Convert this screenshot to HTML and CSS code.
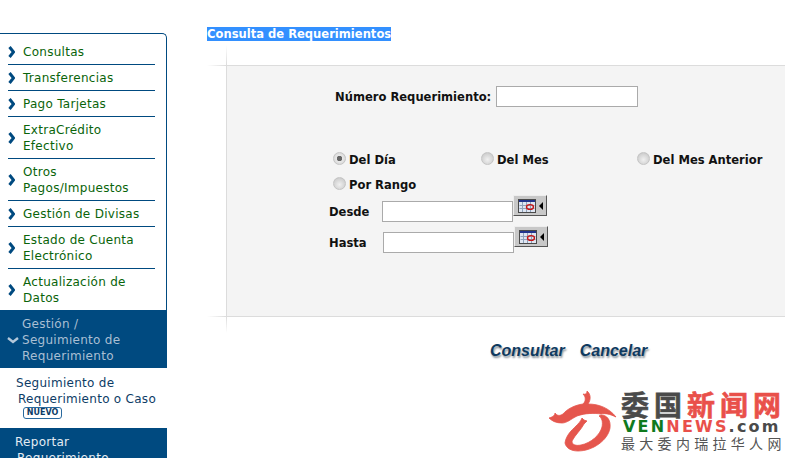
FILE: index.html
```html
<!DOCTYPE html>
<html>
<head>
  <title>Consulta de Requerimientos</title>
  <link rel="stylesheet" href="styles.css">
</head>
<body>
  <div class="sidebar">
    <ul class="menu">
      <li class="item"><svg class="chev" viewBox="0 0 7 12"><path d="M1.5 1l4 5-4 5" /></svg><span>Consultas</span></li>
      <li class="item"><svg class="chev" viewBox="0 0 7 12"><path d="M1.5 1l4 5-4 5" /></svg><span>Transferencias</span></li>
      <li class="item"><svg class="chev" viewBox="0 0 7 12"><path d="M1.5 1l4 5-4 5" /></svg><span>Pago Tarjetas</span></li>
      <li class="item"><svg class="chev" viewBox="0 0 7 12"><path d="M1.5 1l4 5-4 5" /></svg><span>ExtraCrédito<br>Efectivo</span></li>
      <li class="item"><svg class="chev" viewBox="0 0 7 12"><path d="M1.5 1l4 5-4 5" /></svg><span>Otros<br>Pagos/Impuestos</span></li>
      <li class="item"><svg class="chev" viewBox="0 0 7 12"><path d="M1.5 1l4 5-4 5" /></svg><span>Gestión de Divisas</span></li>
      <li class="item"><svg class="chev" viewBox="0 0 7 12"><path d="M1.5 1l4 5-4 5" /></svg><span>Estado de Cuenta<br>Electrónico</span></li>
      <li class="item last"><svg class="chev" viewBox="0 0 7 12"><path d="M1.5 1l4 5-4 5" /></svg><span>Actualización de<br>Datos</span></li>
    </ul>
    <div class="open-head">
      <svg class="chev-down" viewBox="0 0 12 7"><path d="M1 1l5 4 5-4" /></svg>
      <span>Gestión /<br>Seguimiento de<br>Requerimiento</span>
    </div>
    <div class="sub-item">
      <div>Seguimiento de</div>
      <div class="indent">Requerimiento o Caso</div>
      <span class="badge">NUEVO</span>
    </div>
    <div class="sub-active">
      <div>Reportar</div>
      <div class="indent">Requerimiento</div>
    </div>
  </div>

  <div class="main">
    <div class="title-row"><span class="title">Consulta de Requerimientos</span></div>
    <div class="panel">
      <i class="tick top"></i>
      <i class="tick bottom"></i>
      <div class="numero">
        <label for="numero">Número Requerimiento:</label>
        <input type="text" id="numero" class="field num-field">
      </div>
      <div class="radios">
        <label class="radio r1"><input type="radio" name="tipo" checked>Del Día</label>
        <label class="radio r2"><input type="radio" name="tipo">Del Mes</label>
        <label class="radio r3"><input type="radio" name="tipo">Del Mes Anterior</label>
      </div>
      <div class="radios rango">
        <label class="radio r1"><input type="radio" name="tipo">Por Rango</label>
      </div>
      <div class="date-row">
        <label class="date-label" for="desde">Desde</label>
        <input type="text" id="desde" class="field date-field">
        <span class="cal-btn">
          <svg width="18" height="14" viewBox="0 0 18 14">
            <rect x="0.5" y="0.5" width="17" height="13" fill="#dfe6f2" stroke="#4a4a4a" />
            <rect x="1" y="1" width="16" height="2" fill="#22348c" />
            <path d="M1.5 6.5h15M1.5 9.5h15M4.5 3v10M8.5 3v10M12.5 3v10" stroke="#8fa2ba" fill="none" />
            <ellipse cx="12" cy="8" rx="3.5" ry="2.4" fill="none" stroke="#c81414" stroke-width="1.4" />
          </svg>
          <i class="arrow"></i>
        </span>
      </div>
      <div class="date-row second">
        <label class="date-label" for="hasta">Hasta</label>
        <input type="text" id="hasta" class="field date-field">
        <span class="cal-btn">
          <svg width="18" height="14" viewBox="0 0 18 14">
            <rect x="0.5" y="0.5" width="17" height="13" fill="#dfe6f2" stroke="#4a4a4a" />
            <rect x="1" y="1" width="16" height="2" fill="#22348c" />
            <path d="M1.5 6.5h15M1.5 9.5h15M4.5 3v10M8.5 3v10M12.5 3v10" stroke="#8fa2ba" fill="none" />
            <ellipse cx="12" cy="8" rx="3.5" ry="2.4" fill="none" stroke="#c81414" stroke-width="1.4" />
          </svg>
          <i class="arrow"></i>
        </span>
      </div>
    </div>
    <div class="actions">
      <a class="action">Consultar</a>
      <a class="action">Cancelar</a>
    </div>
  </div>

  <div class="watermark">
    <svg class="dragon" width="76" height="70" viewBox="0 0 76 70">
      <path d="M4 33C8 32 10 30 10 28C12 31 15 31 18 29C22 24 30 20 38 19C41 16 41 12 38 9C41 10 42 8 42 6C46 9 46 15 43 19C54 19 64 23 71 32C65 29 60 28 56 29C50 28 40 28 32 31C26 34 22 38 17 38C11 38 7 36 4 33Z" />
      <path d="M56 30C62 30 66 35 65 43C63 55 48 66 33 66C26 66 21 63 20 58C21 50 27 45 31 41C33 39 36 36 37 33L39 35L42 36L39 39C36 45 30 50 27 56C27 60 31 61 36 60C46 58 55 50 57 42C58 37 57 33 54 31Z" />
    </svg>
    <div class="wm-text">
      <div class="wm-big"><span class="dark">委国</span><span class="red">新闻网</span></div>
      <div class="wm-latin"><span class="green">VEN</span><span class="red">NEWS</span><span class="dark">.com</span></div>
      <div class="wm-small">最大委内瑞拉华人网</div>
    </div>
  </div>
</body>
</html>
```

FILE: styles.css
```css
html, body {
  height: 458px;
  overflow: hidden;
}

body {
  margin: 0;
  display: flex;
  background-color: #fff;
  font-family: "DejaVu Sans", Verdana, sans-serif;
  font-size: 12px;
  position: relative;
}

/* menu */
.sidebar {
  width: 167px;
  flex: none;
  margin-top: 33px;
  line-height: 16px;
  letter-spacing: 0.28px;
}

.menu {
  list-style: none;
  margin: 0;
  padding: 5px 11px 0 8px;
  border-top: 1px solid #004a80;
  border-right: 1px solid #004a80;
  border-top-right-radius: 5px;
}

.item {
  display: flex;
  align-items: center;
  padding: 5px 0 4px;
  border-bottom: 1px solid #004a80;
  color: #0a640a;
}

.item.last {
  border-bottom: none;
  padding-bottom: 4px;
}

.chev {
  width: 7px;
  height: 12px;
  margin-right: 8px;
  flex: none;
  fill: none;
  stroke: #004a80;
  stroke-width: 3;
}

.open-head {
  display: flex;
  align-items: center;
  background-color: #004a80;
  color: #a9bfd3;
  padding: 6px 0 4px 7px;
  border-bottom: 1px solid #fff;
}

.chev-down {
  width: 12px;
  height: 7px;
  margin-right: 3px;
  flex: none;
  fill: none;
  stroke: #b4c8da;
  stroke-width: 2.4;
}

.sub-item {
  padding: 6px 0 8px 16px;
  height: 44px;
  color: #0d3c66;
  border-bottom: 1px solid #fff;
}

.indent {
  padding-left: 2px;
}

.badge {
  display: block;
  width: 37px;
  height: 10px;
  margin-left: 7px;
  border: 1px solid #2a6a9e;
  border-radius: 3px;
  color: #0d3c66;
  font-size: 8px;
  font-weight: bold;
  letter-spacing: 0;
  line-height: 10px;
  text-align: center;
}

.sub-active {
  background-color: #004a80;
  color: #e4ecf3;
  padding: 6px 0 0 15px;
}

/* content */
.main {
  flex: 1;
  min-width: 0;
  padding-left: 40px;
}

.title-row {
  padding-top: 27px;
  height: 18px;
  line-height: 14px;
}

.title {
  background-color: #3390ff;
  color: #fff;
  font-size: 11.55px;
  font-weight: bold;
}

.panel {
  margin: 20px 4px 0 19px;
  height: 252px;
  background-color: #f4f4f4;
  border-top: 1px solid #dcdcdc;
  border-bottom: 1px solid #dcdcdc;
  border-left: 1px solid #dcdcdc;
  box-sizing: border-box;
  position: relative;
  font-size: 11.55px;
  font-weight: bold;
  color: #111;
}

.panel::before {
  content: "";
  position: absolute;
  left: -1px;
  top: -21px;
  width: 1px;
  height: 20px;
  background: linear-gradient(to top, #dcdcdc, #fff);
}

.panel::after {
  content: "";
  position: absolute;
  left: -1px;
  bottom: -17px;
  width: 1px;
  height: 16px;
  background: linear-gradient(to bottom, #dcdcdc, #fff);
}

.tick {
  position: absolute;
  left: -20px;
  width: 19px;
  height: 1px;
  background: linear-gradient(to right, #fff, #dcdcdc);
}

.tick.top {
  top: -1px;
}

.tick.bottom {
  bottom: -1px;
}

.numero {
  display: flex;
  align-items: center;
  padding: 20px 0 0 108px;
  gap: 5px;
}

.field {
  box-sizing: border-box;
  height: 21px;
  margin: 0;
  padding: 0;
  border: 1px solid #aaa;
  background-color: #fff;
}

.num-field {
  width: 142px;
}

.radios {
  display: flex;
  padding: 44px 0 0 106px;
  height: 18px;
  line-height: 18px;
}

.rango {
  padding-top: 7px;
}

.radio {
  display: flex;
  align-items: center;
}

.radio input {
  appearance: none;
  width: 13px;
  height: 13px;
  margin: -3px 3px 0 0;
  border-radius: 50%;
  background: radial-gradient(circle at 50% 60%, #f0f0f0, #d0d0d0 70%, #b4b4b4);
  border: 1px solid #c4c4c4;
  box-sizing: border-box;
}

.radio input:checked {
  background: radial-gradient(circle, #666 0, #666 2.5px, #e8e8e8 3px, #cfcfcf);
}

.r1 {
  width: 148px;
}

.r2 {
  width: 156px;
}

.date-row {
  display: flex;
  align-items: flex-start;
  padding: 7px 0 0 102px;
}

.date-row.second {
  padding-top: 9px;
}

.date-label {
  width: 53px;
  padding-top: 1px;
  line-height: 21px;
}

.second .date-label {
  width: 54px;
}

.date-field {
  width: 131px;
}

.cal-btn {
  display: flex;
  align-items: center;
  width: 34px;
  height: 21px;
  box-sizing: border-box;
  margin-top: -6px;
  padding-left: 4px;
  background-color: #c8c8c8;
  border: 1px solid;
  border-color: #eee #555 #555 #eee;
}

.arrow {
  width: 0;
  height: 0;
  margin-left: 3px;
  border: 4px solid transparent;
  border-right-color: #000;
  border-left: none;
}

.actions {
  display: flex;
  gap: 15px;
  padding: 25px 0 0 283px;
}

.action {
  font-family: "Liberation Sans", Arial, sans-serif;
  font-size: 16px;
  font-style: italic;
  font-weight: bold;
  color: #0e3a60;
  text-shadow: 1px 2px 2px #8a949c;
}

/* watermark */
.watermark {
  position: absolute;
  left: 545px;
  top: 385px;
  display: flex;
  align-items: flex-start;
}

.dragon {
  fill: #e5564d;
  stroke: #e5564d;
  stroke-width: 0.8;
}

.wm-text {
  width: 162px;
  padding-top: 5px;
  font-family: "Noto Sans CJK SC", sans-serif;
}

.wm-big {
  height: 30px;
  font-size: 28px;
  font-weight: bold;
  letter-spacing: 5px;
  line-height: 28px;
  white-space: nowrap;
  -webkit-text-stroke: 0.6px;
}

.wm-latin {
  padding-left: 2px;
  font-family: "DejaVu Sans", sans-serif;
  font-size: 16px;
  font-weight: bold;
  letter-spacing: 2.2px;
  line-height: 14px;
  white-space: nowrap;
}

.wm-small {
  font-size: 14px;
  letter-spacing: 4.3px;
  line-height: 18px;
  color: #555;
  white-space: nowrap;
}

.dark {
  color: #4a4a4a;
}

.red {
  color: #e9504a;
}

.green {
  color: #0f7a1e;
}
```
